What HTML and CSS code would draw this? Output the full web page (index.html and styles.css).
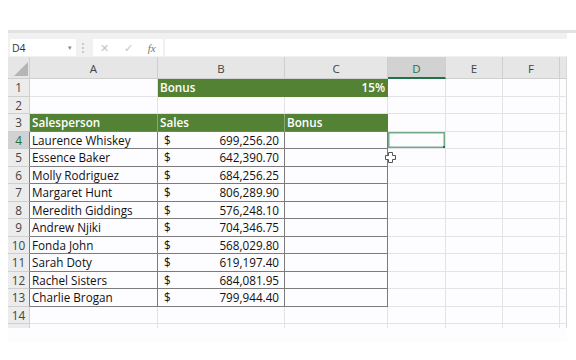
FILE: index.html
```html
<!DOCTYPE html>
<html lang="en">
<head>
    <meta charset="UTF-8">
    <title>Bonus - Excel</title>
    <link rel="stylesheet" href="styles.css">
</head>
<body>
    <div class="window">
        <div class="ribbon-edge"></div>

        <div class="formula-bar">
            <div class="name-box">
                <span>D4</span>
                <span class="caret">▾</span>
            </div>
            <div class="grip"></div>
            <div class="fx-buttons">
                <span class="fx-btn">✕</span>
                <span class="fx-btn">✓</span>
                <span class="fx-btn fx">fx</span>
            </div>
            <div class="formula-input"></div>
        </div>

        <div class="sheet top">
            <!-- column headers -->
            <div class="corner"><span class="corner-tri"></span></div>
            <div class="col-head">A</div>
            <div class="col-head">B</div>
            <div class="col-head">C</div>
            <div class="col-head active">D</div>
            <div class="col-head">E</div>
            <div class="col-head">F</div>
            <div class="col-head tail"></div>

            <!-- row 1 -->
            <div class="row-head">1</div>
            <div class="cell"></div>
            <div class="cell fill">Bonus</div>
            <div class="cell fill num">15%</div>
            <div class="cell"></div>
            <div class="cell"></div>
            <div class="cell"></div>
            <div class="cell tail"></div>

            <!-- row 2 -->
            <div class="row-head">2</div>
            <div class="cell"></div>
            <div class="cell"></div>
            <div class="cell"></div>
            <div class="cell"></div>
            <div class="cell"></div>
            <div class="cell"></div>
            <div class="cell tail"></div>

            <!-- row 3 -->
            <div class="row-head">3</div>
            <div class="cell fill head">Salesperson</div>
            <div class="cell fill head">Sales</div>
            <div class="cell fill head last">Bonus</div>
            <div class="cell"></div>
            <div class="cell"></div>
            <div class="cell"></div>
            <div class="cell tail"></div>
        </div>

        <div class="sheet" id="body"></div>

        <svg class="cursor" width="11" height="11" viewBox="0 0 11 11">
            <path d="M3.5 0.5h4v3h3v4h-3v3h-4v-3h-3v-4h3z" fill="#fff" stroke="#555" stroke-width="1"/>
        </svg>
    </div>

    <script>
        const rows = [
            ['Laurence Whiskey', '699,256.20'],
            ['Essence Baker', '642,390.70'],
            ['Molly Rodriguez', '684,256.25'],
            ['Margaret Hunt', '806,289.90'],
            ['Meredith Giddings', '576,248.10'],
            ['Andrew Njiki', '704,346.75'],
            ['Fonda John', '568,029.80'],
            ['Sarah Doty', '619,197.40'],
            ['Rachel Sisters', '684,081.95'],
            ['Charlie Brogan', '799,944.40']
        ];

        const body = document.getElementById('body');
        let html = '';

        rows.forEach((r, i) => {
            const n = i + 4;
            html += `<div class="row-head edge${n === 4 ? ' active' : ''}">${n}</div>`;
            html += `<div class="cell t">${r[0]}</div>`;
            html += `<div class="cell t money"><span>$</span><span>${r[1]}</span></div>`;
            html += `<div class="cell t"></div>`;
            html += `<div class="cell${n === 4 ? ' selected' : ''}"></div>`;
            html += '<div class="cell"></div><div class="cell"></div><div class="cell tail"></div>';
        });

        html += '<div class="row-head">14</div>';
        html += '<div class="cell"></div>'.repeat(6) + '<div class="cell tail"></div>';
        html += '<div class="row-head stub"></div>';
        html += '<div class="cell stub"></div>'.repeat(6) + '<div class="cell stub tail"></div>';

        body.innerHTML = html;
    </script>
</body>
</html>
```

FILE: styles.css
```css
:root {
    --green: #548235;
    --excel: #217346;
    --grid: #e3e2e6;
    --dark: #7b7b7b;
    --head-bg: #e6e6e6;
    --head-line: #cfcfcf;
    --sheet-bg: #fdfcff;
}

* {
    box-sizing: border-box;
}

body {
    margin: 0;
    background: #fff;
    font-family: 'Open Sans', 'Noto Sans', sans-serif;
    color: #111;
}

.window {
    position: relative;
    padding-top: 30px;
    padding-left: 8px;
}

.ribbon-edge {
    height: 3px;
    background: #e2e2e2;
}

.formula-bar {
    display: flex;
    align-items: flex-end;
    height: 24px;
    padding: 0 0 1px 2px;
    background: #f1f1f1;
    width: 559px;
}

.name-box {
    display: flex;
    justify-content: space-between;
    align-items: center;
    width: 66px;
    height: 17px;
    padding: 0 4px 0 2px;
    background: #fff;
    font-size: 10.5px;
    color: #333;
}

.caret {
    font-size: 7px;
    color: #888;
}

.grip {
    width: 2px;
    height: 10px;
    margin: 0 9px 3px 6px;
    border-left: 2px dotted #c9c9c9;
}

.fx-buttons {
    display: flex;
    justify-content: space-around;
    align-items: center;
    width: 70px;
    height: 17px;
    background: #fff;
    font-size: 11px;
    color: #c4c4c4;
}

.fx-btn.fx {
    font-family: 'Liberation Serif', serif;
    font-style: italic;
    color: #777;
}

.formula-input {
    flex: 1;
    height: 17px;
    margin-left: 2px;
    background: #fff;
}

.sheet {
    display: grid;
    grid-template-columns: 22px 128px 127px 103px 58px 57px 57px 7px;
    grid-auto-rows: 17.5px;
    width: 559px;
    background: var(--sheet-bg);
    font-size: 11.7px;
}

.sheet.top {
    grid-template-rows: 22px;
}

.corner,
.col-head,
.row-head {
    background: var(--head-bg);
    color: #444;
    border-right: 1px solid var(--head-line);
    border-bottom: 1px solid var(--head-line);
    display: flex;
    align-items: center;
    justify-content: center;
}

.col-head {
    font-size: 11.5px;
    padding-top: 2px;
}

.col-head.active {
    background: #d2d2d2;
    color: var(--excel);
    border-bottom: 2px solid var(--excel);
}

.corner {
    position: relative;
    padding-top: 3px;
}

.corner-tri {
    width: 0;
    height: 0;
    border-left: 14px solid transparent;
    border-bottom: 14px solid #b5b5b5;
    margin-left: 4px;
}

.row-head {
    font-size: 11.8px;
    background: #ececec;
}

.row-head.active {
    background: #d2d2d2;
    color: var(--excel);
}

.row-head.edge {
    border-right-color: var(--dark);
}

.cell {
    border-right: 1px solid var(--grid);
    border-bottom: 1px solid var(--grid);
    padding: 0 2px;
    display: flex;
    align-items: center;
    white-space: nowrap;
    overflow: hidden;
}

.tail {
    border-right-color: #d9d9d9;
}

.stub {
    height: 4px;
    border-bottom: none;
}

.fill {
    background: var(--green);
    color: #fff;
    font-weight: 600;
    border-right-color: var(--green);
    border-bottom-color: var(--green);
}

.fill.head {
    border-right-color: #8aa77a;
    border-bottom-color: var(--dark);
}

.fill.head.last {
    border-right-color: var(--green);
}

.num {
    justify-content: flex-end;
}

.t {
    border-right-color: var(--dark);
    border-bottom-color: var(--dark);
}

.money {
    justify-content: space-between;
    padding: 0 5px 0 6px;
}

.selected {
    position: relative;
    box-shadow: inset 0 0 0 1.5px #74a98a;
}

.selected::after {
    content: '';
    position: absolute;
    right: -2px;
    bottom: -2px;
    width: 4px;
    height: 4px;
    background: var(--excel);
}

.cursor {
    position: absolute;
    left: 385px;
    top: 152px;
}
```
